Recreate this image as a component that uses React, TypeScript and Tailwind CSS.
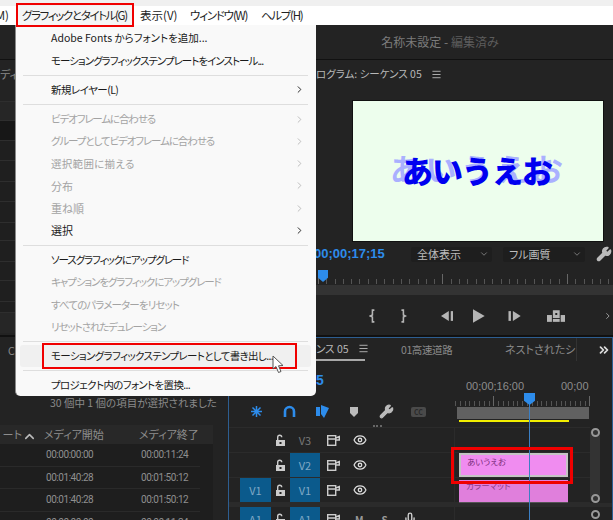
import React from 'react';
import { ChevronRight, ChevronUp, ChevronDown, ChevronsRight, Menu, Wrench, Eye, Mic } from 'lucide-react';

const jp = 'font-["Noto_Sans_CJK_JP","Noto_Sans",sans-serif] [font-feature-settings:"palt"]';

type Item = { label?: string; off?: boolean; sub?: boolean; sep?: boolean; hot?: boolean; fit?: string };

// kana in the reference font is narrower than Noto's, so each line gets its own tracking
const items: Item[] = [
  { label: 'Adobe Fonts からフォントを追加...', fit: 'text-[10.5px]' },
  { label: 'モーショングラフィックステンプレートをインストール...', fit: 'text-[10.5px] tracking-[-0.97px]' },
  { sep: true },
  { label: '新規レイヤー(L)', sub: true, fit: 'text-[10.5px] tracking-[-0.55px]' },
  { sep: true },
  { label: 'ビデオフレームに合わせる', off: true, sub: true, fit: 'text-[10.5px] tracking-[-1.15px]' },
  { label: 'グループとしてビデオフレームに合わせる', off: true, sub: true, fit: 'text-[10.5px] tracking-[-1.1px]' },
  { label: '選択範囲に揃える', off: true, sub: true, fit: 'text-[10.5px] tracking-[0.3px]' },
  { label: '分布', off: true, sub: true, fit: 'text-[11px]' },
  { label: '重ね順', off: true, sub: true, fit: 'text-[11px]' },
  { label: '選択', sub: true, fit: 'text-[11px]' },
  { sep: true },
  { label: 'ソースグラフィックにアップグレード', fit: 'text-[10.5px] tracking-[-1.1px]' },
  { label: 'キャプションをグラフィックにアップグレード', off: true, fit: 'text-[10.5px] tracking-[-1.1px]' },
  { label: 'すべてのパラメーターをリセット', off: true, fit: 'text-[10.5px] tracking-[-0.87px]' },
  { label: 'リセットされたデュレーション', off: true, fit: 'text-[10.5px] tracking-[-1.1px]' },
  { sep: true },
  { label: 'モーショングラフィックステンプレートとして書き出し...', hot: true, fit: 'text-[10.5px] tracking-[-0.65px]' },
  { sep: true },
  { label: 'プロジェクト内のフォントを置換...', fit: 'text-[10.5px] tracking-[-0.65px]' },
];

const GraphicsMenu = () => (
  <div className="absolute left-[15px] top-[25px] w-[301px] h-[371px] bg-[#f9f9f9] border-l border-[#8a8a8a] rounded-b-[5px] pt-[2px] pl-[4px] pr-[5px]">
    {items.map((it, i) =>
      it.sep ? (
        <div key={i} className="h-[7px] flex items-center px-[3px]">
          <div className="h-px w-full bg-[#dedede]" />
        </div>
      ) : (
        <div
          key={i}
          className={`h-[22.3px] flex items-center justify-between pl-[31px] pr-[6px] rounded-[3px] ${it.fit} ${
            it.off ? 'text-[#a3a3a3]' : 'text-[#1a1a1a]'
          } ${it.hot ? 'bg-[#f0f0f0]' : ''}`}
        >
          <span className="whitespace-nowrap">{it.label}</span>
          {it.sub && <ChevronRight size={11} strokeWidth={it.off ? 1.5 : 2} />}
        </div>
      ),
    )}
  </div>
);

const Cursor = () => (
  <svg className="absolute left-[272px] top-[355px]" width="13" height="19" viewBox="0 0 13 19">
    <path d="M1 1 L1 14 L4 11.5 L6.5 17.5 L9 16.5 L6.5 10.8 L11 10.5 Z" fill="#fff" stroke="#555" strokeWidth="1" />
  </svg>
);

const MenuBar = () => (
  <div className="h-[19px] bg-white flex items-center text-[11.5px] text-[#222] whitespace-nowrap">
    <div className="w-[9px] flex justify-end overflow-hidden">
      <span>M)</span>
    </div>
    <div className="ml-[8px] w-[115px] h-full pl-[5px] bg-[#f5f5f5] flex items-center tracking-[-1.35px]">グラフィックとタイトル(G)</div>
    <span className="ml-[8px] w-[50px]">表示(V)</span>
    <span className="w-[71px] tracking-[-1.2px]">ウィンドウ(W)</span>
    <span className="tracking-[-1.3px]">ヘルプ(H)</span>
  </div>
);

const LeftRow = ({ h, bg }: { h: string; bg: string }) => <div className={`${h} ${bg} border-b border-[#2e2e2e]`} />;

const LeftTop = () => (
  <div className="w-[316px] h-[275px] bg-[#232323] text-[11px] text-[#888]">
    <div className="h-[42px] pt-[6px] border-b border-[#2e2e2e] whitespace-nowrap">ディ</div>
    <LeftRow h="h-[19px]" bg="bg-[#262626]" />
    <LeftRow h="h-[20px]" bg="bg-[#171717]" />
    <LeftRow h="h-[20px]" bg="bg-[#1f1f1f]" />
    <LeftRow h="h-[21px]" bg="bg-[#1f1f1f]" />
    <LeftRow h="h-[20px]" bg="bg-[#1f1f1f]" />
    <LeftRow h="h-[21px]" bg="bg-[#1f1f1f]" />
    <LeftRow h="h-[18px]" bg="bg-[#1f1f1f]" />
    <LeftRow h="h-[21px]" bg="bg-[#1f1f1f]" />
    <LeftRow h="h-[19px]" bg="bg-[#1f1f1f]" />
    <LeftRow h="h-[21px]" bg="bg-[#1f1f1f]" />
    <LeftRow h="h-[11px]" bg="bg-[#1f1f1f]" />
    <div className="h-[20px] bg-[#262626]" />
  </div>
);

const Select = ({ label, w }: { label: string; w: string }) => (
  <div className={`${w} h-[15px] bg-[#1e1e1e] rounded-[2px] flex items-center justify-between pl-[6px] pr-[3px] text-[11px] text-[#bdbdbd]`}>
    <span>{label}</span>
    <ChevronDown size={10} className="text-[#888]" />
  </div>
);

const Ticks = ({ count, major, gap, shift = 0 }: { count: number; major: number; gap: number; shift?: number }) => (
  <div className="flex items-end" style={{ gap }}>
    {Array.from({ length: count }).map((_, i) => (
      <div key={i} className={`w-px ${(i + shift) % major === 0 ? 'h-[10px] bg-[#666]' : 'h-[5px] bg-[#555]'}`} />
    ))}
  </div>
);

const Program = () => (
  <div className="w-[297px] h-[275px] bg-[#232323] relative overflow-hidden">
    <div className="h-[20px] pt-[7px] flex items-center text-[10.5px] text-[#b8b8b8] whitespace-nowrap">
      <span>ログラム: シーケンス 05</span>
      <Menu size={11} className="ml-[9px] mt-[2px]" />
    </div>
    <div className="ml-[36px] mt-[20px] w-[252px] h-[142px] bg-[#edfeed] border border-[#111] relative">
      <span className="absolute left-[37px] top-[49px] text-[31px] leading-[36px] font-bold [font-feature-settings:normal] tracking-[4.5px] text-[#aab0ff] whitespace-nowrap">あいうえお</span>
      <span className="absolute left-[49px] top-[51px] text-[31px] leading-[36px] font-black [font-feature-settings:normal] tracking-[-1px] text-[#0000f0] whitespace-nowrap">あいうえお</span>
    </div>
    <div className="h-[20px] mt-[2px] flex items-center">
      <span className="w-[95px] text-[13px] font-semibold text-[#2d8ceb] font-['Liberation_Sans',sans-serif] -ml-[2px] shrink-0">00;00;17;15</span>
      <div className="w-[2px]" />
      <Select label="全体表示" w="w-[81px]" />
      <span className="w-[11px]" />
      <Select label="フル画質" w="w-[82px]" />
      <Wrench size={16} fill="#bbb" className="ml-[11px] text-[#bbb]" />
    </div>
    <div className="h-[14px] mt-[6px] flex items-end pl-[2px] relative">
      <Ticks count={36} major={15} gap={7.3} />
      <div className="absolute left-[2px] top-[0px] w-[10px] h-[12px] bg-[#2d8ceb] [clip-path:polygon(0_0,100%_0,100%_65%,50%_100%,0_65%)]" />
    </div>
    <div className="h-[10px] mt-[1px] bg-[#333]" />
    <div className="h-[38px] pt-[4px] flex items-center relative text-[#b5b5b5]">
      <svg className="ml-[53px]" width="8" height="14" viewBox="0 0 8 14" fill="none" stroke="currentColor" strokeWidth="1.6"><path d="M5.5 1 L3.5 1 L3.5 6 L1.5 7 L3.5 8 L3.5 13 L5.5 13" /></svg>
      <svg className="ml-[22px]" width="8" height="14" viewBox="0 0 8 14" fill="none" stroke="currentColor" strokeWidth="1.6"><path d="M2.5 1 L4.5 1 L4.5 6 L6.5 7 L4.5 8 L4.5 13 L2.5 13" /></svg>
      <svg className="ml-[34px]" width="13" height="10" viewBox="0 0 13 10" fill="currentColor"><path d="M8 0 V10 L0 5 Z" /><rect x="10" y="0" width="2.5" height="10" /></svg>
      <svg className="ml-[19px]" width="14" height="14" viewBox="0 0 14 14" fill="currentColor"><path d="M1 0 L13 7 L1 14 Z" /></svg>
      <svg className="ml-[22px]" width="13" height="10" viewBox="0 0 13 10" fill="currentColor"><rect x="0.5" y="0" width="2.5" height="10" /><path d="M5 0 V10 L13 5 Z" /></svg>
      <svg className="ml-[26px]" width="19" height="12" viewBox="0 0 19 12" fill="currentColor"><path d="M6 0 H13 V8 H6 Z M8.5 3 V5 H10.5 V3 Z" fillRule="evenodd" /><rect x="0" y="5" width="5" height="7" /><rect x="14" y="5" width="5" height="7" /><rect x="6" y="9" width="7" height="3" /></svg>
      <ChevronRight size={10} className="ml-[38px]" />
    </div>
  </div>
);

const mediaRows = [
  ['00:00:00:00', '00:00:11:24'],
  ['00:01:40:28', '00:01:50:12'],
  ['00:01:40:28', '00:01:50:12'],
  ['00:00:00:00', '00:00:11:24'],
];

const ProjectPanel = () => (
  <div className="w-[229px] h-[183px] bg-[#232323] border-r border-[#2d5e91] pt-[6px] text-[#8d8d8d]">
    <div className="h-[82px] text-[10.5px] text-[#8a8a8a]">
      <div className="h-[15px] pl-[8px] leading-[15px]">C</div>
      <div className="mt-[37px] pl-[50px] whitespace-nowrap">30 個中 1 個の項目が選択されました</div>
    </div>
    <div className="w-[213px] h-[19px] bg-[#282828] flex items-center text-[11px] text-[#8d8d8d] whitespace-nowrap">
      <span className="w-[22px] text-right">ート</span>
      <ChevronUp size={15} strokeWidth={2.5} className="text-[#bbb] mt-[3px]" />
      <span className="ml-[7px] w-[95px]">メディア開始</span>
      <span>メディア終了</span>
    </div>
    <div className="w-[213px] bg-[#1e1e1e]">
      {mediaRows.map((r, i) => (
        <div key={i} className="w-[200px] h-[22.5px] flex items-center border-b border-[#2a2a2a] text-[10px] tracking-[-0.45px] text-[#8f8f8f] font-['Roboto',sans-serif]">
          <span className="ml-[46px] w-[95px]">{r[0]}</span>
          <span>{r[1]}</span>
        </div>
      ))}
    </div>
  </div>
);

const LockIcon = () => (
  <svg className="ml-[4px] text-[#ccc]" width="11" height="12" viewBox="0 0 11 12" fill="currentColor">
    <path d="M2 6 V3.2 A2.7 2.7 0 0 1 7.4 3.2 H6 A1.3 1.3 0 0 0 3.4 3.2 V6 Z" />
    <path d="M1 6 H10 V12 H1 Z M4.5 8 V10 H6.5 V8 Z" fillRule="evenodd" />
  </svg>
);

const SyncIcon = () => (
  <svg className="ml-[7px] text-[#ccc]" width="13" height="11" viewBox="0 0 13 11" fill="none" stroke="currentColor" strokeWidth="1.4">
    <rect x="0.7" y="0.7" width="8" height="9.6" />
    <path d="M0.7 4 H8.7 M8.7 3 L12.3 1.5 V5 H8.7" />
  </svg>
);

const TrackRow = ({ patch, name, lit, clip, audio }: { patch?: string; name: string; lit?: boolean; clip?: React.ReactNode; audio?: boolean }) => (
  <div className="h-[25px] flex border-b border-[#2b2b2b] mr-[22px]">
    <div className="w-[226px] flex items-center pl-[11px] relative border-r border-[#2b2b2b]">
      <div className={`w-[31px] h-[24px] flex items-center justify-center text-[11px] ${patch ? 'bg-[#0b5a8c] text-[#7fa9c6]' : ''}`}>{patch}</div>
      <LockIcon />
      <div className={`ml-[4px] w-[30px] h-[24px] flex items-center justify-center text-[11px] ${lit ? 'bg-[#0b5a8c] text-[#7fa9c6]' : 'text-[#777]'}`}>{name}</div>
      <SyncIcon />
      {audio ? (
        <div className="flex items-center text-[10px] font-bold text-[#999]">
          <span className="ml-[15px]">M</span>
          <span className="ml-[18px]">S</span>
          <Mic size={14} strokeWidth={2.4} className="ml-[15px] text-[#ccc]" />
        </div>
      ) : (
        <Eye size={14} strokeWidth={2.2} className="ml-[13px] text-[#ddd]" />
      )}
    </div>
    <div className="flex-1 pl-[4px]">{clip}</div>
  </div>
);

const Timeline = () => (
  <div className="flex-1 h-[183px] bg-[#232323] border-t border-r border-[#2d5e91] relative overflow-hidden">
    <div className="h-[23px] flex items-center text-[10.5px] text-[#8a8a8a] whitespace-nowrap">
      <div className="ml-[87px] w-[49px] h-full flex items-center border-b-2 border-[#a8a8a8] text-[#b8b8b8]">
        <span>ンス 05</span>
        <Menu size={11} className="ml-[9px] shrink-0" />
      </div>
      <span className="ml-[36px] w-[104px] tracking-[-0.4px]">01高速道路</span>
      <span className="w-[70px] text-[11px]">ネストされたシ</span>
      <div className="h-full border-l border-[#333] ml-[1px] pl-[20px] flex items-center">
        <ChevronsRight size={14} strokeWidth={3} className="text-[#ddd]" />
      </div>
    </div>
    <div className="h-[59px] flex">
      <div className="w-[226px]">
        <div className="ml-[87px] mt-[8px] text-[14px] leading-[22px] font-semibold text-[#2d8ceb] font-['Liberation_Sans',sans-serif]">5</div>
        <div className="mt-[13px] flex items-center text-[#2d8ceb]">
          <svg className="ml-[21px]" width="13" height="13" viewBox="0 0 13 13" fill="none" stroke="currentColor" strokeWidth="1.5"><path d="M6.5 1 V12 M1 6.5 H12 M2.5 2.5 L10.5 10.5 M10.5 2.5 L2.5 10.5" /></svg>
          <svg className="ml-[20px]" width="13" height="13" viewBox="0 0 13 13" fill="none" stroke="currentColor" strokeWidth="2.6"><path d="M2 12 V6.5 A4.5 4.5 0 0 1 11 6.5 V12" /></svg>
          <svg className="ml-[19px]" width="14" height="13" viewBox="0 0 14 13" fill="currentColor"><path d="M1 2 H5 V11 H1 Z M6 0 L14 3 L9 13 L6 9 Z" /></svg>
          <svg className="ml-[21px] text-[#bbb]" width="8" height="10" viewBox="0 0 8 10" fill="currentColor"><path d="M0 0 H8 V6 L4 10 L0 6 Z" /></svg>
          <Wrench size={15} fill="#bbb" className="ml-[21px] text-[#bbb]" />
          <span className="ml-[17px] w-[15px] h-[10px] rounded-[2px] bg-[#4a4a4a] text-[7px] leading-[10px] text-center font-bold text-[#2b2b2b]">CC</span>
        </div>
      </div>
      <div className="flex-1 relative">
        <div className="absolute left-[11px] top-[18px] text-[11px] leading-[14px] text-[#8d8d8d] whitespace-nowrap font-['Liberation_Sans',sans-serif]">00;00;16;00</div>
        <div className="absolute left-[106px] top-[18px] text-[11px] leading-[14px] text-[#8d8d8d] whitespace-nowrap font-['Liberation_Sans',sans-serif]">00;00</div>
        <div className="absolute left-0 top-[35px]"><Ticks count={29} major={20} gap={3.8} shift={12} /></div>
        <div className="absolute left-[2px] top-[46px] w-[132px] h-[12px] bg-[#616161]" />
      </div>
    </div>
    <div className="h-[8px] flex border-b border-[#2b2b2b] mr-[22px]">
      <div className="w-[226px] flex justify-center pl-[71px]">
        <div className="mt-[5px] w-[9px] border-t-2 border-dotted border-[#666]" />
      </div>
      <div className="ml-[4px] w-[110px] h-[2px] bg-[#f2ee00]" />
    </div>
    <TrackRow name="V3" />
    <TrackRow
      name="V2"
      lit
      clip={
        <div className="w-[109px] h-[24px] bg-[#f08cf0] border-2 border-[#c4c4c4] pl-[6px] text-[8.5px] leading-[12px] text-[#7b2c7b]">あいうえお</div>
      }
    />
    <TrackRow
      patch="V1"
      name="V1"
      lit
      clip={
        <div className="w-[109px] h-[23px] mt-[2px] bg-[#e07fdc] border-b border-[#555] pl-[7px] text-[8.5px] leading-[10px] text-[#8a3b88]">カラーマット</div>
      }
    />
    <div className="h-[4px] bg-[#2b2b2b]" />
    <TrackRow patch="A1" name="A1" lit audio />
    <div className="absolute left-[361px] top-[90px] w-[10px] h-[91px] flex flex-col justify-between">
      <div className="h-[75px] rounded-full bg-[#333] flex flex-col justify-between items-center">
        <div className="w-[9px] h-[9px] rounded-full border-2 border-[#999]" />
        <div className="w-[9px] h-[9px] rounded-full border-2 border-[#999]" />
      </div>
      <div className="w-[9px] h-[9px] ml-[0.5px] rounded-full border-2 border-[#999]" />
    </div>
    <div className="absolute left-[300px] top-[66px] bottom-0 w-px bg-[#3b7fc4]" />
    <div className="absolute left-[295px] top-[55px] w-[11px] h-[12px] bg-[#2d8ceb] [clip-path:polygon(0_0,100%_0,100%_65%,50%_100%,0_65%)]" />
  </div>
);

const App = () => (
  <div className={`w-[613px] h-[520px] relative overflow-hidden bg-[#232323] ${jp}`}>
    <div className="h-[6px] bg-[#f0f0f0]" />
    <MenuBar />
    <div className="h-[35px] bg-[#232323] border-b border-[#111] flex items-center justify-center pl-[267px] text-[12px] text-[#7c7c7c]">
      名称未設定 - <span className="text-[#5d5d5d] ml-[3px]">編集済み</span>
    </div>
    <div className="flex">
      <LeftTop />
      <Program />
    </div>
    <div className="h-[2px] bg-[#111]" />
    <div className="flex">
      <ProjectPanel />
      <Timeline />
    </div>
    <GraphicsMenu />
    {/* callout boxes drawn on top of the screenshot */}
    <div className="absolute left-[16px] top-[3px] w-[118px] h-[24px] border-[2px] border-[#f00000]" />
    <div className="absolute left-[42px] top-[343px] w-[255px] h-[26px] border-[2px] border-[#f00000]" />
    <div className="absolute left-[451px] top-[447px] w-[122px] h-[37px] border-[3px] border-[#f00000]" />
    <Cursor />
  </div>
);

export default App;
